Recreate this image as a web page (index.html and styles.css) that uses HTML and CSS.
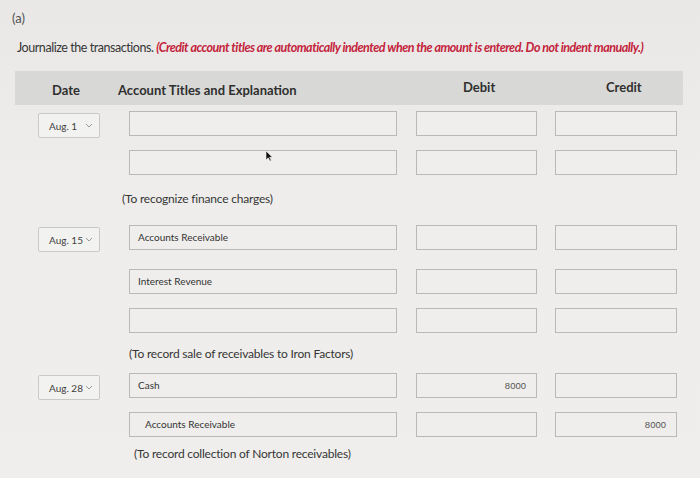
FILE: index.html
```html
<!DOCTYPE html>
<html lang="en">
<head>
<meta charset="utf-8">
<title>Journalize the transactions</title>
<link rel="stylesheet" href="styles.css">
</head>
<body>
<div class="page">
  <div class="part">(a)</div>
  <p class="instr">Journalize the transactions. <em class="note">(Credit account titles are automatically indented when the amount is entered. Do not indent manually.)</em></p>

  <div class="journal">
    <div class="line head">
      <div class="h-date">Date</div>
      <div class="h-acct">Account Titles and Explanation</div>
      <div class="h-debit">Debit</div>
      <div class="h-credit">Credit</div>
    </div>

    <div class="entry e1">
      <div class="line">
        <div class="c-date"><div class="select"><span>Aug. 1</span><svg class="chev" viewBox="0 0 8 5" width="8" height="5"><polyline points="1,1 4,4 7,1" fill="none" stroke="#9a9a98" stroke-width="1"/></svg></div></div>
        <div class="c-acct"><div class="field"></div></div>
        <div class="c-debit"><div class="field"></div></div>
        <div class="c-credit"><div class="field"></div></div>
      </div>
      <div class="line next">
        <div class="c-date"></div>
        <div class="c-acct cursor-host"><div class="field"></div>
          <svg class="cursor" viewBox="0 0 8 12" width="8" height="12"><path d="M1 1 L1 10 L3.2 7.8 L5 11 L6.3 10.4 L4.6 7.3 L7.4 7.2 Z" fill="#111" stroke="#f4f4f2" stroke-width="0.6"/></svg>
        </div>
        <div class="c-debit"><div class="field"></div></div>
        <div class="c-credit"><div class="field"></div></div>
      </div>
      <div class="expl">(To recognize finance charges)</div>
    </div>

    <div class="entry e2">
      <div class="line">
        <div class="c-date"><div class="select"><span>Aug. 15</span><svg class="chev" viewBox="0 0 8 5" width="8" height="5"><polyline points="1,1 4,4 7,1" fill="none" stroke="#9a9a98" stroke-width="1"/></svg></div></div>
        <div class="c-acct"><div class="field">Accounts Receivable</div></div>
        <div class="c-debit"><div class="field"></div></div>
        <div class="c-credit"><div class="field"></div></div>
      </div>
      <div class="line next wide">
        <div class="c-date"></div>
        <div class="c-acct"><div class="field">Interest Revenue</div></div>
        <div class="c-debit"><div class="field"></div></div>
        <div class="c-credit"><div class="field"></div></div>
      </div>
      <div class="line next">
        <div class="c-date"></div>
        <div class="c-acct"><div class="field"></div></div>
        <div class="c-debit"><div class="field"></div></div>
        <div class="c-credit"><div class="field"></div></div>
      </div>
      <div class="expl">(To record sale of receivables to Iron Factors)</div>
    </div>

    <div class="entry e3">
      <div class="line">
        <div class="c-date"><div class="select"><span>Aug. 28</span><svg class="chev" viewBox="0 0 8 5" width="8" height="5"><polyline points="1,1 4,4 7,1" fill="none" stroke="#9a9a98" stroke-width="1"/></svg></div></div>
        <div class="c-acct"><div class="field">Cash</div></div>
        <div class="c-debit"><div class="field num">8000</div></div>
        <div class="c-credit"><div class="field"></div></div>
      </div>
      <div class="line next">
        <div class="c-date"></div>
        <div class="c-acct"><div class="field indent">Accounts Receivable</div></div>
        <div class="c-debit"><div class="field"></div></div>
        <div class="c-credit"><div class="field num">8000</div></div>
      </div>
      <div class="expl">(To record collection of Norton receivables)</div>
    </div>
  </div>
</div>
</body>
</html>
```

FILE: styles.css
```css
* { box-sizing: border-box; }

html, body {
  margin: 0;
  height: 100%;
}

body {
  font-family: Lato, "Open Sans", sans-serif;
  color: #3b3b3b;
  background: linear-gradient(180deg, #e9e8e6 0%, #eeedeb 40%, #efeeec 100%);
  overflow: hidden;
}

.page {
  padding: 10px 0 0 15px;
}

.part {
  font-size: 13px;
  line-height: 16px;
  color: #505050;
  margin-left: -3px;
}

.instr {
  margin: 14px 0 0 2px;
  font-size: 12.5px;
  line-height: 16px;
  color: #363636;
  letter-spacing: -0.45px;
  white-space: nowrap;
}

.note {
  color: #c4233c;
  font-weight: 700;
  letter-spacing: -0.5px;
}

.journal {
  width: 668px;
  margin-top: 15px;
}

.line {
  display: grid;
  grid-template-columns: 100px 290px 142px 136px;
  height: 25px;
}

.head {
  height: 34px;
  background: #d8d8d6;
  align-items: center;
  font-weight: 700;
  font-size: 13px;
  color: #2f2f2f;
  padding-top: 4px;
}

.h-date { padding-left: 37px; }
.h-acct { padding-left: 3px; }
.h-debit { padding-left: 58px; margin-top: -6px; }
.h-credit { padding-left: 59px; margin-top: -7px; }

.e1 { margin-top: 6px; }
.e2 { margin-top: 18px; }
.e3 { margin-top: 11px; }

.line.next { margin-top: 14px; }
.line.wide { margin-top: 19px; }

.c-date, .c-acct, .c-debit, .c-credit {
  height: 25px;
}

.select {
  margin-left: 23px;
  margin-top: 2px;
  width: 62px;
  height: 25px;
  border: 1px solid #c9c9c7;
  border-radius: 2px;
  background: #f2f2f0;
  display: flex;
  align-items: center;
  justify-content: space-between;
  padding: 0 6px 0 10px;
  font-size: 10px;
  color: #3f3f3f;
}

.chev { display: block; }

.field {
  height: 25px;
  border: 1px solid #b9b9b7;
  background: #efeeec;
  font-size: 10px;
  line-height: 23px;
  color: #333;
  padding-left: 8px;
  white-space: nowrap;
}

.field.indent { padding-left: 15px; }

.field.num {
  text-align: right;
  padding-right: 10px;
  font-family: "Liberation Sans", Arial, sans-serif;
  font-size: 9.5px;
  color: #555;
}

.c-acct .field { margin-left: 14px; margin-right: 8px; }
.c-debit .field { margin-left: 11px; width: 121px; }
.c-credit .field { margin-left: 8px; width: 122px; }

.cursor-host { position: relative; }

.cursor {
  position: absolute;
  left: 150px;
  top: 0;
}

.expl {
  font-size: 12px;
  line-height: 16px;
  color: #363636;
  letter-spacing: -0.2px;
}

.e1 .expl { margin-left: 107px; margin-top: 16px; }
.e2 .expl { margin-left: 114px; margin-top: 13px; }
.e3 .expl { margin-left: 119px; margin-top: 9px; }
```
